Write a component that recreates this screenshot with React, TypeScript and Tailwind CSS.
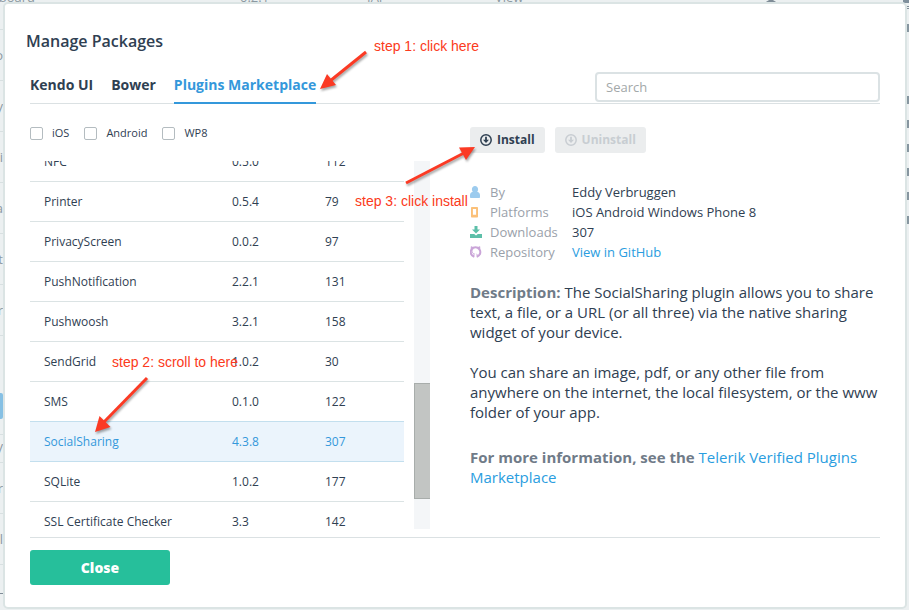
import type { ReactNode } from "react";

type Plugin = { name: string; version: string; downloads: number };

const plugins: Plugin[] = [
  { name: "NFC", version: "0.5.0", downloads: 112 },
  { name: "Printer", version: "0.5.4", downloads: 79 },
  { name: "PrivacyScreen", version: "0.0.2", downloads: 97 },
  { name: "PushNotification", version: "2.2.1", downloads: 131 },
  { name: "Pushwoosh", version: "3.2.1", downloads: 158 },
  { name: "SendGrid", version: "1.0.2", downloads: 30 },
  { name: "SMS", version: "0.1.0", downloads: 122 },
  { name: "SocialSharing", version: "4.3.8", downloads: 307 },
  { name: "SQLite", version: "1.0.2", downloads: 177 },
  { name: "SSL Certificate Checker", version: "3.3", downloads: 142 },
];

const selected = "SocialSharing";

function CircleDownIcon() {
  return (
    <svg viewBox="0 0 12 12" className="size-3 shrink-0" fill="none" stroke="currentColor" aria-hidden="true">
      <circle cx="6" cy="6" r="5.2" strokeWidth="1.5" />
      <path d="M6 2.800v3.600" strokeWidth="1.800" />
      <path d="M3 5.700h6L6 9z" fill="currentColor" stroke="none" />
    </svg>
  );
}

function PersonIcon() {
  return (
    <svg viewBox="0 0 12 12" className="size-3" fill="#9ccbee" aria-hidden="true">
      <path d="M5 0C3.200 0 1.900 1.300 1.900 3.200c0 1 .3 1.900.9 2.600C1 6.300 0 7.500 0 9.200V11c0 .6.4 1 1 1h8c.6 0 1-.4 1-1V9.200C10 7.500 9 6.300 7.200 5.800c.6-.7.9-1.600.9-2.600C8.100 1.300 6.800 0 5 0z" />
    </svg>
  );
}

function PhoneIcon() {
  return (
    <svg viewBox="0 0 12 12" className="size-3" aria-hidden="true">
      <path
        d="M2 1h5c.6 0 1 .4 1 1v8.500c0 .6-.4 1-1 1H2c-.6 0-1-.4-1-1V2c0-.6.4-1 1-1zm.900 2v5.800h3.200V3z"
        fill="#fbc078"
        fillRule="evenodd"
      />
    </svg>
  );
}

function DownloadIcon() {
  return (
    <svg viewBox="0 0 12 12" className="size-3" fill="#5cbfa9" aria-hidden="true">
      <path d="M4.500 0h3v3.500H10L6 7.500 2 3.500h2.500z" />
      <path d="M0 8h4.200L6 9.600 7.800 8H12v4H0z" />
    </svg>
  );
}

function GitHubIcon() {
  return (
    <svg viewBox="0 0 12 12" className="size-3" fill="none" stroke="#caa5d8" aria-hidden="true">
      <path d="M3.900 11.200V9c0-.6.200-.9.500-1.200C2.900 7.500 2 6.700 2 5.200c0-.7.200-1.200.6-1.600" strokeWidth="1" />
      <path d="M4 10.700A4.800 4.800 0 1 1 7 10.700" strokeWidth="2" />
      <path d="M1.100 3.200V.6l2.300 1zM9.900 3.200V.6l-2.300 1z" fill="#caa5d8" strokeWidth=".6" />
      <path d="M1.300 8.700c.9 0 1.200 1.300 2.700 1.100M7.100 11.200V9c0-.6-.2-.9-.5-1.200" strokeWidth="1" />
    </svg>
  );
}

function InfoRow({ icon, label, children }: { icon: ReactNode; label: string; children: ReactNode }) {
  return (
    <div className="flex h-5 items-center">
      <dt className="flex w-[102px] items-center gap-2 text-[#9aa1aa]">
        {icon}
        {label}
      </dt>
      <dd>{children}</dd>
    </div>
  );
}

function Filter({ label }: { label: string }) {
  return (
    <label className="flex items-center gap-[9px]">
      <input
        type="checkbox"
        className="size-[13px] appearance-none rounded-[2px] border border-[#b4bcc0] bg-white checked:bg-[#3498db]"
      />
      {label}
    </label>
  );
}

/* The project page that shows around the edges of the dialog. */
function Backdrop() {
  const letters = [
    { y: 45, text: "o" },
    { y: 96, text: "y" },
    { y: 147, text: "ti" },
    { y: 198, text: "a" },
    { y: 249, text: "t" },
    { y: 300, text: "r" },
    { y: 438, text: "V" },
    { y: 478, text: "r" },
    { y: 529, text: "l" },
  ];
  const lines = [29, 80, 131, 182, 233, 284, 335, 434, 462, 513, 564];
  const carets = [24, 96, 120, 144, 168, 192, 216];
  return (
    <div className="absolute inset-0 overflow-hidden text-[13px] leading-5 text-[#8c99a1]" aria-hidden="true">
      <span className="absolute -top-[13px] left-[-24px]">Clipboard</span>
      <span className="absolute -top-[13px] left-[240px]">0.2.1</span>
      <span className="absolute -top-[13px] left-[367px]">IAP</span>
      <span className="absolute -top-[13px] left-[495px]">View</span>
      {lines.map((y) => (
        <i key={y} className="absolute left-0 h-px w-1 bg-[#d8e0e1]" style={{ top: y }} />
      ))}
      {letters.map((l) => (
        <span key={l.y} className="absolute right-full -mr-[3px]" style={{ top: l.y }}>
          {l.text}
        </span>
      ))}
      <i className="absolute top-[393px] left-0 h-[26px] w-[3px] rounded-r-[2px] bg-[#86c0e4]" />
      <i className="absolute top-[593px] left-0 h-px w-[3px] bg-[#7f8c97]" />
      <svg className="absolute top-0 left-[764px] h-[3px] w-4" viewBox="0 0 16 3" fill="none" stroke="#7f8c97" strokeWidth="2">
        <path d="M2 3 7 0l5 3" />
      </svg>
      <i className="absolute top-0 right-0 h-[3px] w-[6px] bg-[#7f8f9c]" />
      <i className="absolute top-[6px] right-0 h-[3px] w-[2px] border-y border-[#7f8c97]" />
      {carets.map((y) => (
        <i key={y} className="absolute right-0 h-2 w-[2px] bg-[#8796a0]" style={{ top: y }} />
      ))}
    </div>
  );
}

/* Red walkthrough notes drawn over the dialog. */
function Annotations() {
  return (
    <div className="pointer-events-none absolute inset-0 font-['Liberation_Sans',Arial,sans-serif] text-sm leading-4 whitespace-nowrap text-[#fb3a20]">
      <svg
        className="absolute top-0 left-0 h-[450px] w-[500px] drop-shadow-[1px_2px_1px_rgba(0,0,0,0.35)]"
        viewBox="0 0 500 450"
        fill="#fb3a24"
        stroke="#fb3a24"
        strokeWidth="3"
        aria-hidden="true"
      >
        <path d="M366 52 330 81" />
        <path d="M320 89 327 74 336 85z" stroke="none" />
        <path d="M147 378 104 422" />
        <path d="M95 432 99.500 416 110.500 427z" stroke="none" />
        <path d="M406 183 464 153" />
        <path d="M475 147 459 147.500 466 160z" stroke="none" />
      </svg>
      <span className="absolute top-[38px] left-[374px]">step 1: click here</span>
      <span className="absolute top-[354px] left-[112px]">step 2: scroll to here</span>
      <span className="absolute top-[193px] left-[355px]">step 3: click install</span>
    </div>
  );
}

export default function App() {
  return (
    <div className="relative min-h-screen bg-[#ecf0f1] pt-[2px] pr-[2px] pb-[1px] pl-[3px] font-['Open_Sans','Noto_Sans',sans-serif] text-[#2f4052]">
      <Backdrop />
      <main
        role="dialog"
        aria-labelledby="dialog-title"
        className="relative rounded-[5px] border-2 border-[#dbe4e4] bg-white px-[25px] pt-[25px] pb-[22px]"
      >
        <h1 id="dialog-title" className="-ml-1 text-base leading-6 font-semibold">
          Manage Packages
        </h1>

        <div className="mt-[15px] flex items-start justify-between border-b border-[#dbe1e3]">
          <nav className="-mb-px flex items-start gap-[18px] pt-[7px] text-sm leading-5 font-bold">
            <button type="button" className="h-[29px] border-b-2 border-transparent pb-[7px]">Kendo UI</button>
            <button type="button" className="h-[29px] border-b-2 border-transparent pb-[7px]">Bower</button>
            <button type="button" className="h-[29px] border-b-2 border-[#3498db] pb-[7px] text-[#3498db]">
              Plugins Marketplace
            </button>
          </nav>
          <input
            type="search"
            aria-label="Search"
            placeholder="Search"
            className="mt-[4px] h-[30px] w-[285px] rounded-[4px] border-2 border-[#dbe2e4] px-[9px] text-[13px] outline-none placeholder:text-[#a3a8a9]"
          />
        </div>

        <div className="mt-[23px] flex gap-10">
          <section className="w-[400px] shrink-0" aria-label="Plugins">
            <div className="flex h-[13px] items-center gap-[15px] text-[11px]">
              <Filter label="iOS" />
              <Filter label="Android" />
              <Filter label="WP8" />
            </div>
            <div className="mt-[21px] flex h-[368px] gap-[10px] overflow-hidden">
              <table className="-mt-[19px] h-[400px] grow table-fixed border-separate border-spacing-0 text-[12px]">
                <tbody>
                  {plugins.map((p) => (
                    <tr
                      key={p.name}
                      className={
                        p.name === selected
                          ? "h-10 bg-[#ebf4fc] text-[#3498db] *:border-b *:border-[#c3dfee]"
                          : p.name === "SMS"
                            ? "h-10 *:border-b *:border-[#c3dfee]"
                            : "h-10 *:border-b *:border-[#dbe3e4]"
                      }
                    >
                      <td className="w-[188px] pl-[14px]">{p.name}</td>
                      <td className="w-[93px] pl-[14px]">{p.version}</td>
                      <td className="pl-[14px]">{p.downloads}</td>
                    </tr>
                  ))}
                </tbody>
              </table>
              <div className="w-4 bg-[#f4f6f8] pt-[222px]">
                <div className="h-[116px] border border-r-0 border-[#a8adab] bg-[#c2c5c3]" />
              </div>
            </div>
          </section>

          <section className="min-w-0 grow" aria-label="Plugin details">
            <div className="flex gap-[10px] text-[12px] leading-[26px] font-bold">
              <button type="button" className="flex items-center gap-[5px] rounded-[3px] bg-[#ebedee] px-[10px]">
                <CircleDownIcon />
                Install
              </button>
              <button
                type="button"
                disabled
                className="flex items-center gap-[5px] rounded-[3px] bg-[#ebedee] px-[10px] text-[#c8cdd2]"
              >
                <CircleDownIcon />
                Uninstall
              </button>
            </div>

            <dl className="mt-[29px] text-[13px] leading-5">
              <InfoRow icon={<PersonIcon />} label="By">Eddy Verbruggen</InfoRow>
              <InfoRow icon={<PhoneIcon />} label="Platforms">iOS Android Windows Phone 8</InfoRow>
              <InfoRow icon={<DownloadIcon />} label="Downloads">307</InfoRow>
              <InfoRow icon={<GitHubIcon />} label="Repository">
                <a href="#repository" className="text-[#2a9de0]">View in GitHub</a>
              </InfoRow>
            </dl>

            <div className="mt-5 text-[15px] leading-5">
              <p>
                <strong className="text-[#707b88]">Description:</strong> The SocialSharing plugin allows you to share
                text, a file, or a URL (or all three) via the native sharing widget of your device.
              </p>
              <p className="mt-5">
                You can share an image, pdf, or any other file from anywhere on the internet, the local filesystem, or
                the www folder of your app.
              </p>
              <p className="mt-[25px]">
                <strong className="text-[#707b88]">For more information, see the</strong>{" "}
                <a href="#marketplace" className="text-[#2a9de0]">Telerik Verified Plugins Marketplace</a>
              </p>
            </div>
          </section>
        </div>

        <footer className="mt-2 border-t border-[#dbe1e3] pt-3">
          <button type="button" className="h-[35px] w-[140px] rounded-[3px] bg-[#26bf9b] text-sm font-extrabold text-white">
            Close
          </button>
        </footer>
      </main>
      <Annotations />
    </div>
  );
}
